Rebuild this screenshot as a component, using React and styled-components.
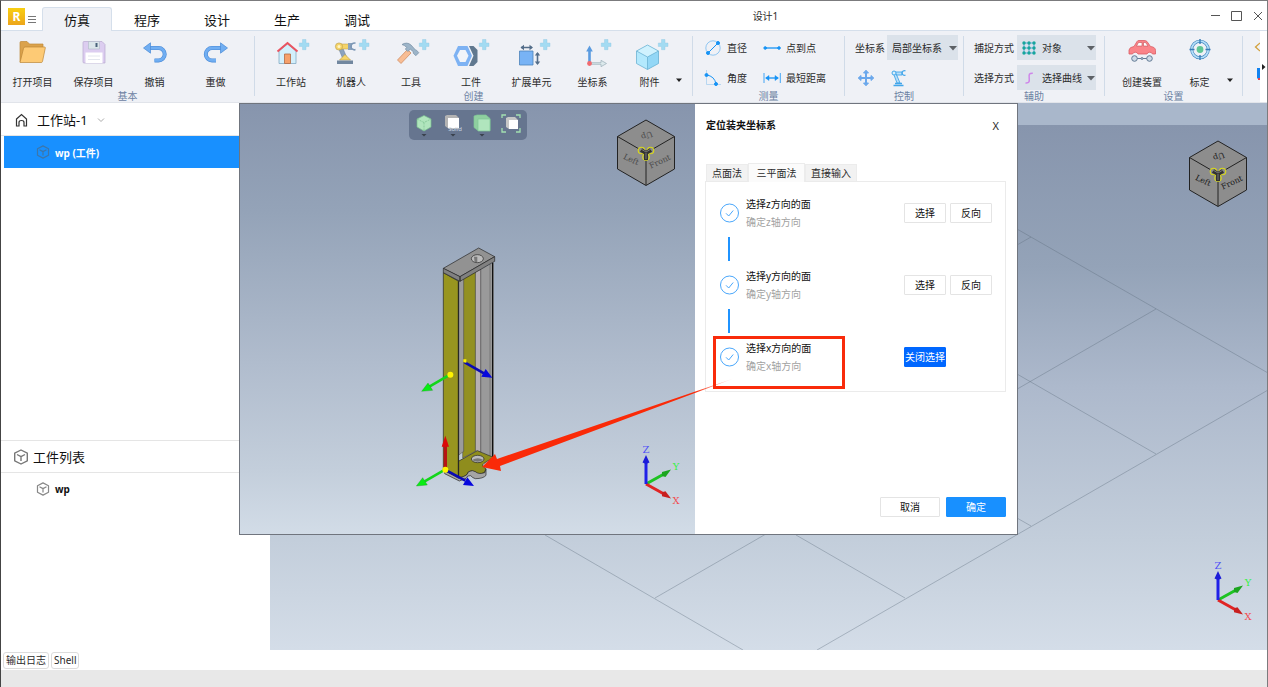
import React from "react";
import styled, { createGlobalStyle } from "styled-components";

const GlobalStyle = createGlobalStyle`
  * { box-sizing: border-box; }
  body { margin: 0; background: #fff; }
  body, button, select {
    font-family: "Noto Sans", "Noto Sans CJK SC", sans-serif;
    font-size: 10px;
    color: #2b2b2b;
  }
  button { padding: 0; border: 0; background: none; cursor: pointer; }
  h1, h2, p, ul, ol { margin: 0; padding: 0; font-weight: normal; list-style: none; }
  svg { display: block; flex: none; }
`;

/* ---------- window frame ---------- */

const Window = styled.div`
  display: flex;
  flex-direction: column;
  min-height: 100vh;
  background: #fff;
  border: solid #7b7b7d;
  border-width: 1px 1px 0 1px;
  border-left-color: #444;
`;

const TitleBar = styled.header`
  display: flex;
  height: 30px;
  border-bottom: 1px solid #d5dfeb;
`;

const Brand = styled.div`
  display: flex;
  align-items: flex-end;
  gap: 2px;
  width: 41px;
  padding: 0 0 5px 7px;
`;

const MenuTabs = styled.nav`
  display: flex;
  align-items: flex-end;
`;

const MenuTab = styled.button`
  width: 70px;
  height: ${(p) => (p.$active ? 24 : 23)}px;
  margin-bottom: -1px;
  font-size: 13px;
  line-height: 22px;
  color: #111;
  border: 1px solid ${(p) => (p.$active ? "#d5dfeb" : "transparent")};
  border-bottom: 0;
  border-radius: 3px 3px 0 0;
  background: ${(p) => (p.$active ? "#eff1f6" : "transparent")};
`;

const WindowTitle = styled.h1`
  flex: 1;
  text-align: center;
  font-size: 10px;
  line-height: 30px;
`;

const WindowButtons = styled.div`
  display: flex;
  align-items: center;
  justify-content: flex-end;
  gap: 6px;
  width: 128px;
  padding-right: 2px;
`;

/* ---------- ribbon ---------- */

const Ribbon = styled.div`
  display: flex;
  height: 72px;
  overflow: hidden;
  background: #eff1f6;
  border-bottom: 1px solid #e1e4ea;
`;

const Group = styled.section`
  display: flex;
  flex-direction: column;
  flex: none;
  width: ${(p) => p.$width}px;
  padding-top: 4px;
`;

const GroupName = styled.h2`
  font-size: 10px;
  line-height: 12px;
  text-align: center;
  color: #6d82a3;
`;

const Separator = styled.div`
  flex: none;
  width: 1px;
  margin: 5px 0 6px;
  background: #d0dbe8;
`;

const Tools = styled.div`
  display: flex;
  height: 55px;
  padding: 3px 0 0 ${(p) => p.$inset || 0}px;
`;

const Tool = styled.button`
  display: flex;
  flex-direction: column;
  align-items: center;
  gap: 9px;
  width: ${(p) => p.$width || 60}px;
  line-height: 14px;
`;

const MoreButton = styled.button`
  display: flex;
  align-items: flex-end;
  padding-bottom: 6px;
`;

const MeasureGrid = styled.div`
  display: grid;
  grid-template-columns: 54px auto;
  grid-auto-rows: 25px;
  justify-content: start;
  column-gap: 5px;
  row-gap: 5px;
  height: 55px;
  padding-left: 11px;
`;

const SmallTool = styled.button`
  display: flex;
  align-items: center;
  gap: 5px;
  white-space: nowrap;
`;

const Fields = styled.div`
  display: flex;
  flex-direction: column;
  gap: 5px;
  height: 55px;
  padding-left: 10px;
`;

const Field = styled.label`
  display: flex;
  align-items: center;
  gap: ${(p) => p.$gap}px;
  height: 25px;
  white-space: nowrap;
`;

const SelectBox = styled.span`
  position: relative;
  display: flex;
  align-items: center;
  gap: 6px;
  width: ${(p) => p.$width}px;
  height: 25px;
  padding-left: 5px;
  background: #dbe2ea;

  select {
    flex: 1;
    min-width: 0;
    height: 25px;
    padding: 0;
    border: 0;
    background: none;
    appearance: none;
  }
  > svg:last-child {
    position: absolute;
    right: 1px;
    pointer-events: none;
  }
`;

const IconRow = styled.div`
  display: flex;
  align-items: center;
  gap: 15px;
  height: 25px;
  padding-left: 2px;
`;

const Overflow = styled.div`
  display: flex;
  flex: 1;
  flex-direction: column;
  align-items: flex-end;
  gap: 13px;
  padding-top: 9px;
  overflow: hidden;
`;

const OverflowButton = styled.button`
  width: 7px;
  background: #fff;
`;

/* ---------- workspace ---------- */

const Workspace = styled.main`
  position: relative;
  display: flex;
  flex: 1;
`;

const Sidebar = styled.aside`
  display: flex;
  flex-direction: column;
  width: 269px;
  padding-top: 1px;
`;

const TreeSection = styled.section`
  flex: ${(p) => p.$share} 1 0;
  border-top: ${(p) => (p.$divided ? "1px solid #e5e5e5" : "0")};
`;

const TreeHeader = styled.div`
  display: flex;
  align-items: center;
  gap: ${(p) => p.$gap}px;
  height: 32px;
  padding-left: ${(p) => p.$inset}px;
  border-bottom: 1px solid #e5e5e5;
  font-size: 13px;
  color: #111;

  button { display: flex; padding: 4px 0; }
`;

const TreeItem = styled.li`
  display: flex;
  align-items: center;
  gap: 5px;
  height: 32px;
  margin-left: 3px;
  padding-left: 32px;
  font-weight: bold;
  color: ${(p) => (p.$selected ? "#fff" : "#111")};
  background: ${(p) => (p.$selected ? "#1890ff" : "transparent")};
`;

const Viewport = styled.div`
  position: relative;
  flex: 1;
  background: linear-gradient(#a9b7cb 22px, #8795ad 22px, #94a3b8 30%, #adb9cc 52%, #c3cedb 80%, #d4dde8);
`;

const GridLines = styled.svg`
  position: absolute;
  inset: 0;
  width: 100%;
  height: 100%;
`;

const NavCube = styled.div`
  position: absolute;
  top: ${(p) => p.$top}px;
  right: 19px;
`;

const AxisMarker = styled.div`
  position: absolute;
  right: 13px;
  bottom: 25px;
`;

const LogBar = styled.div`
  display: flex;
  align-items: center;
  gap: 2px;
  height: 20px;
  padding-left: 2px;
`;

const LogButton = styled.button`
  height: 17px;
  padding: 0 2px;
  line-height: 15px;
  border: 1px solid #dcdcdc;
  border-radius: 3px;
  background: #fff;
`;

const StatusBar = styled.footer`
  height: 17px;
  background: #e8e8e8;
`;

/* ---------- dialog ---------- */

const Dialog = styled.div`
  position: absolute;
  top: 0;
  left: 238px;
  display: flex;
  width: 779px;
  height: 432px;
  border: 1px solid #70757e;
  background: #fff;
`;

const Preview = styled.div`
  position: relative;
  width: 455px;
  background: linear-gradient(#8795ad, #94a3b8 25%, #b0bccd 60%, #c3cedb 85%, #d2dce7);
`;

const ViewTools = styled.div`
  display: flex;
  justify-content: center;
  gap: 5px;
  width: 118px;
  height: 30px;
  margin: 6px auto 0;
  padding-top: 3px;
  border-radius: 5px;
  background: #66758f;
`;

const Model = styled.div`
  position: absolute;
  top: 126px;
  left: 160px;
`;

const Panel = styled.div`
  display: flex;
  flex: 1;
  flex-direction: column;
  padding: 12px 11px 17px 10px;
`;

const PanelHeader = styled.div`
  display: flex;
  justify-content: space-between;
  height: 18px;
  padding: 0 7px 0 1px;
  line-height: 18px;

  h2 { font-size: 10px; font-weight: bold; color: #111; }
  button { font-size: 11px; }
`;

const TabList = styled.div`
  display: flex;
  align-items: flex-end;
  height: 18px;
  margin-top: 29px;
  padding-left: 1px;
`;

const Tab = styled.button`
  width: ${(p) => p.$width}px;
  height: ${(p) => (p.$active ? 19 : 17)}px;
  margin-bottom: ${(p) => (p.$active ? -1 : 0)}px;
  line-height: 16px;
  z-index: 1;
  border: 1px solid #ececec;
  border-bottom: 0;
  background: ${(p) => (p.$active ? "#fbfbfb" : "#f2f2f2")};
`;

const Steps = styled.ol`
  height: 211px;
  padding: 13px 12px 0 13px;
  border: 1px solid #ebebeb;
`;

const Step = styled.li`
  height: 72px;
`;

const StepRow = styled.div`
  display: flex;
  align-items: center;
  height: 36px;
`;

const StepText = styled.div`
  flex: 1;
  padding-left: 7px;
  line-height: 18px;
  color: #111;

  p + p { color: #a2a2a2; }
`;

const StepActions = styled.div`
  display: flex;
  gap: 4px;
  min-width: 89px;
`;

const StepButton = styled.button`
  width: ${(p) => (p.$wide ? 60 : 42)}px;
  height: 20px;
  line-height: 18px;
  white-space: nowrap;
  color: ${(p) => (p.$fill ? "#fff" : "#111")};
  border: 1px solid ${(p) => p.$fill || "#e4e4e4"};
  border-radius: 1px;
  background: ${(p) => p.$fill || "#fff"};
`;

const Connector = styled.div`
  width: 2px;
  height: 24px;
  margin: 6px 0 0 9px;
  background: #1f93ff;
`;

const PanelFooter = styled.div`
  display: flex;
  justify-content: flex-end;
  gap: 6px;
  margin-top: auto;
`;

const Callout = styled.svg`
  position: absolute;
  top: -1px;
  left: -1px;
  pointer-events: none;
`;

/* ---------- drawings ---------- */

const Caret = ({ size = 6, color = "#222" }) => (
  <svg width={size} height="8" viewBox="0 0 8 8" aria-hidden="true">
    <path d="M0 2h8L4 6.500z" fill={color} />
  </svg>
);

const Plus = () => (
  <path d="M29.500 1.500h3.500v3.500h3v3.500h-3v3.200h-3.500v-3.200h-3.200v-3.500h3.200z" fill="#a3dbf2" stroke="#8fc7e2" strokeWidth=".4" />
);

const BigIcon = ({ children, plus }) => (
  <svg width={plus ? 36 : 28} height="28" viewBox={plus ? "0 0 36 28" : "0 0 28 28"} fill="none" overflow="visible" aria-hidden="true">
    {children}
    {plus && <Plus />}
  </svg>
);

const FolderIcon = () => (
  <BigIcon>
    <path d="M1 24V4.500q0-1 1-1h6l2.500 2.500h13.500v4" fill="#dba24b" stroke="#c08a3a" strokeWidth=".7" />
    <path d="M1 24.500 4.500 10.500q.3-1.500 1.500-1.500H25.500q1 0 .8 1L23.500 23.500q-.3 1-1.300 1z" fill="#fdca75" stroke="#bb8738" strokeWidth=".7" />
  </BigIcon>
);
const SaveIcon = () => (
  <BigIcon>
    <path d="M3 4.500q0-1 1-1h18l3 3V25H4q-1 0-1-1z" fill="#dccdf0" stroke="#b9a9d0" strokeWidth=".7" />
    <path d="M8.500 3.500h11V11h-11z" fill="#dbe6ea" stroke="#b0b8c6" strokeWidth=".6" />
    <path d="M15.500 5h2v4h-2z" fill="#48637a" />
    <path d="M5.500 14.500h17V25h-17z" fill="#fff" />
    <path d="M8 18h12M8 21.500h12" stroke="#e3e6ee" />
  </BigIcon>
);
const UndoIcon = () => (
  <BigIcon>
    <path d="M8.500 10h9a6.200 6.200 0 0 1 0 12.400h-4" stroke="#4989d6" strokeWidth="4" />
    <path d="M8.500 10h9a6.200 6.200 0 0 1 0 12.400h-4" stroke="#70aef2" strokeWidth="2.800" />
    <path d="M2.500 10 9.500 4.800v10.400z" fill="#70aef2" stroke="#4989d6" strokeWidth=".7" />
  </BigIcon>
);
const RedoIcon = () => (
  <BigIcon>
    <path d="M19 10h-9a6.200 6.200 0 0 0 0 12.400h4" stroke="#4989d6" strokeWidth="4" />
    <path d="M19 10h-9a6.200 6.200 0 0 0 0 12.400h4" stroke="#70aef2" strokeWidth="2.800" />
    <path d="M25.500 10 18.500 4.800v10.400z" fill="#70aef2" stroke="#4989d6" strokeWidth=".7" />
  </BigIcon>
);
const HouseIcon = () => (
  <BigIcon plus>
    <path d="M6 13 14.500 6 23 13v12.500H6z" fill="#d3effb" stroke="#84abc4" strokeWidth=".8" />
    <path d="M11.500 16h6v9.500h-6z" fill="#f6a06a" stroke="#b26a42" strokeWidth=".8" />
    <path d="m4.500 13.500 10-8.500 10 8.500" stroke="#ea5360" strokeWidth="2" />
  </BigIcon>
);
const RobotIcon = () => (
  <BigIcon plus>
    <path d="m5 9 4.500 11h4.500L8.500 7z" fill="#8ba3bd" stroke="#60789a" strokeWidth=".5" />
    <path d="M6 6h10v5H8z" fill="#f5d469" stroke="#b99b45" strokeWidth=".5" />
    <circle cx="6" cy="8.500" r="3.600" fill="#f5d469" stroke="#b99b45" strokeWidth=".6" />
    <circle cx="6" cy="8.500" r="1.500" fill="#fff4c4" />
    <path d="M15 5h4v7h-4z" fill="#8ba3bd" />
    <path d="M22.500 5.200a3.400 3.400 0 1 0 0 6.400" stroke="#7c97b5" strokeWidth="1.600" />
    <path d="M6.500 22 12 16.500 17.500 22z" fill="#f5d469" stroke="#b99b45" strokeWidth=".6" />
    <path d="M4 22.500h16V26H4z" fill="#71879f" />
  </BigIcon>
);
const HammerIcon = () => (
  <BigIcon plus>
    <path d="m14.500 11.500 3.500 3.500L8 25.500 4.500 22z" fill="#f8bd94" stroke="#d18e63" strokeWidth=".8" />
    <path d="M9 6.500q5-3 9 .5l4.500 5 1 .2 2.300 2.500-3 3-2.500-2.500v-1.500l-3-2.500-2.500 2.300-2.500-2.500 1.500-1.500q-2.500-2.500-4.800-3z" fill="#9db5c9" stroke="#768ea4" strokeWidth=".7" />
  </BigIcon>
);
const NutIcon = () => (
  <BigIcon plus>
    <path d="M14 8h6.500l4 4v12l-4 4H14z" fill="#60788f" />
    <path d="M14 8h2l4.500 9.800L16 28h-2z" fill="#f1f4f9" />
    <path d="M5 8h9.500l4.500 9.800L14.500 28H5L.5 17.800z" fill="#7db2f3" />
    <path d="M7 12h5.500l3 5.800-3 6.200H7l-3-6.200z" fill="#f1f4f9" />
  </BigIcon>
);
const ExtendIcon = () => (
  <BigIcon plus>
    <path d="M5.500 13h13.500v14H5.500z" fill="#78b3f5" stroke="#4d83ba" strokeWidth=".8" />
    <path d="M7 9.500h11M23.500 15v10.500" stroke="#536d89" strokeWidth="1.600" />
    <path d="M10 6.800 6.500 9.500l3.500 2.700M15.500 6.800 19 9.500l-3.500 2.700M20.800 17.500l2.700-3.500 2.700 3.500M20.800 23.500l2.700 3.500 2.700-3.500" fill="#536d89" />
  </BigIcon>
);
const FrameIcon = () => (
  <BigIcon plus>
    <path d="M14.500 25V11" stroke="#5a9be0" strokeWidth="2.600" />
    <path d="M11.200 13.500 14.500 7.500l3.300 6z" fill="#5a9be0" />
    <path d="M15 24.700h11v-2.400l5.500 3.200-5.500 3.200v-2.400H15z" fill="#dce9ec" stroke="#9aaeb8" strokeWidth=".7" />
    <circle cx="14.500" cy="25.500" r="2.400" fill="#f26a6f" />
  </BigIcon>
);
const AccessoryIcon = () => (
  <BigIcon plus>
    <path d="m4.500 13 11-6 11 6v12.500l-11 6-11-6z" fill="#b3e9fd" />
    <path d="m4.500 13 11-6 11 6-11 6z" fill="#d0f2fe" />
    <path d="m15.500 19 11-6v12.500l-11 6z" fill="#93d7f6" />
    <path d="m4.500 13 11-6 11 6v12.500l-11 6-11-6zl11 6 11-6M15.500 19v12.500" stroke="#6cb3d3" strokeWidth=".8" />
  </BigIcon>
);
const CarIcon = () => (
  <BigIcon>
    <path d="M1 16v-4q.5-3 5-3.500L9 3.500q.5-1 2-1h5q2 0 3 1l3.500 5q5 .5 5 4V16h-3a3 3 0 0 0-5.500 0h-9a3 3 0 0 0-5.500 0z" fill="#fa8489" stroke="#d95e65" strokeWidth=".8" />
    <path d="m8.500 8 2-3.500H14V8zM15.500 8V4.500h2L20 8z" fill="#fff" stroke="#c5545a" strokeWidth=".6" />
    <g stroke="#637b95" fill="#cfdbe7">
      <path d="M9 20.500h11" />
      <circle cx="6.500" cy="20.500" r="2.800" /><circle cx="21.500" cy="20.500" r="2.800" />
      <circle cx="14" cy="20.500" r="1" />
    </g>
  </BigIcon>
);
const TargetIcon = () => (
  <BigIcon>
    <circle cx="14" cy="11.500" r="8.300" stroke="#3f83bd" strokeWidth="3" />
    <circle cx="14" cy="11.500" r="8.300" stroke="#b5e0fa" strokeWidth="1.800" />
    <circle cx="14" cy="11.500" r="3.400" fill="#60c695" />
    <path d="M14 1v5M14 17v5M3.500 11.500h5M19.500 11.500h5" stroke="#377bb5" strokeWidth="1.400" />
  </BigIcon>
);

const SmallIcon = ({ children, color = "#1693f5" }) => (
  <svg width="18" height="18" viewBox="0 0 18 18" fill="none" stroke={color} aria-hidden="true">{children}</svg>
);
const DiameterIcon = () => (
  <SmallIcon>
    <circle cx="9" cy="9" r="7.200" stroke="#78bbf0" strokeWidth=".8" />
    <path d="M4 14 14 4" />
    <circle cx="4" cy="14" r="1.500" fill="#1693f5" /><circle cx="14" cy="4" r="1.500" fill="#1693f5" />
  </SmallIcon>
);
const AngleIcon = () => (
  <SmallIcon>
    <path d="M2.500 1v14.500H17" stroke="#a9d0f0" strokeWidth=".8" />
    <path d="M2.500 6q8 1 9.500 9" />
    <circle cx="2.500" cy="6" r="1.500" fill="#1693f5" /><circle cx="12" cy="15" r="1.500" fill="#1693f5" />
  </SmallIcon>
);
const PointIcon = () => (
  <SmallIcon>
    <path d="M2 9h15" strokeWidth="1.300" />
    <circle cx="2.200" cy="9" r="1.300" fill="#1693f5" /><circle cx="16" cy="9" r="1.300" fill="#1693f5" />
  </SmallIcon>
);
const DistanceIcon = () => (
  <SmallIcon>
    <path d="M1 4v10M17.300 4v10" strokeWidth=".8" />
    <path d="M3 9h12" strokeWidth="1.300" />
    <path d="M6 6.500 2.500 9 6 11.500zM12 6.500 15.500 9 12 11.500z" fill="#1693f5" strokeWidth=".5" />
  </SmallIcon>
);
const MoveIcon = () => (
  <SmallIcon color="#6ba8ec">
    <path d="M9 3v12M3 9h12" strokeWidth="2" />
    <path d="M6.500 4 9 1.200 11.500 4zM6.500 14 9 16.800 11.500 14zM4 6.500 1.200 9 4 11.500zM14 6.500 16.800 9 14 11.500z" fill="#6ba8ec" />
  </SmallIcon>
);
const ArmIcon = () => (
  <SmallIcon color="#42a6ea">
    <path d="M4 6l3 8h3L6 4.500M5 3h7v3H6" fill="#b8def8" strokeWidth=".9" />
    <circle cx="4" cy="4" r="2" fill="#d8effc" />
    <path d="M15.500 2a2.300 2.300 0 1 0 0 4" strokeWidth="1.300" />
    <path d="M3.500 16.500h10M5 14.500h7" strokeWidth="1.500" />
  </SmallIcon>
);
const SnapGridIcon = () => (
  <svg width="14" height="14" viewBox="0 0 14 14" aria-hidden="true">
    <path d="M2 1v12M7 1v12M12 1v12M1 2h12M1 7h12M1 12h12" stroke="#3799d4" fill="none" strokeWidth=".8" />
    {[2, 7, 12].map((x) => [2, 7, 12].map((y) => <circle key={`${x}-${y}`} cx={x} cy={y} r="1.700" fill="#17a69c" />))}
  </svg>
);
const CurveIcon = () => (
  <svg width="14" height="14" viewBox="0 0 14 14" fill="none" aria-hidden="true">
    <path d="M3.500 12c4 .3 4-1.500 3.700-5S7 2 10.800 2.200" stroke="#cf86ea" strokeWidth="1.500" />
  </svg>
);

const CubeOutline = ({ size, color }) => (
  <svg width={size} height={size} viewBox="0 0 16 16" fill="none" stroke={color} strokeWidth="1.400" strokeLinejoin="round" aria-hidden="true">
    <path d="m8 1 6.300 3.200v7.600L8 15l-6.300-3.200V4.200zM4 5.500 8 7.600l4-2.100M8 7.600V12" />
  </svg>
);

const LOBES = [[25.5, 31.5], [34.5, 31.5], [30, 38]];

const OrientationCube = ({ ink }) => (
  <svg width="60" height="68" viewBox="0 0 60 68" aria-hidden="true">
    <path d="m30 1 28.500 16.500v32.500L30 66.500 1.500 50V17.500z" fill="#8d8d8d" stroke="#222" />
    <path d="M1.500 17.500 30 34l28.500-16.500M30 34v32" fill="none" stroke="#222" />
    <g fontFamily="DejaVu Serif, serif" fontSize="8" textAnchor="middle" fill={ink}>
      <text transform="translate(14 43) rotate(25)">Left</text>
      <text transform="translate(45 45) rotate(-25)">Front</text>
      <text transform="translate(30 14) rotate(160)">Up</text>
    </g>
    {LOBES.map(([x, y]) => <circle key={x} cx={x} cy={y} r="3.800" fill="#dada18" />)}
    {LOBES.map(([x, y]) => <circle key={x} cx={x} cy={y} r="2.700" fill="#8d8d8d" />)}
    <path d="m25 31 5 3 5-3M30 34v7" stroke="#333" strokeWidth="4" fill="none" />
    <path d="m25 30 5 3 5-3M30 34v6" stroke="#777" fill="none" />
  </svg>
);

const Axes = () => (
  <svg width="42" height="64" viewBox="0 0 42 64" aria-hidden="true">
    <g strokeWidth="3" fill="none">
      <path d="M6 39 24 29" stroke="#1ec323" /><path d="M6 39 24 49" stroke="#e02424" /><path d="M6 39V17" stroke="#2020e8" />
    </g>
    <path d="M2.500 17.500 6 10l3.500 7.500L6 19z" fill="#1c1cd8" />
    <path d="m22 27 9-2.500-5.500 7.500-3.500-1z" fill="#1ba51f" />
    <path d="m25.500 46.200 5.500 7.300-9-2.300v-4z" fill="#c81f1f" />
    <g fontFamily="DejaVu Serif, serif" fontSize="10" textAnchor="middle">
      <text x="6" y="8" fill="#5252f5">Z</text>
      <text x="36" y="25" fill="#3df04b">Y</text>
      <text x="36" y="59" fill="#f24e52">X</text>
    </g>
  </svg>
);

const Fixture = () => (
  <svg width="130" height="270" viewBox="0 0 390 810" aria-hidden="true">
    <path d="M238 120 281 98V682L238 664z" fill="#9a9a9a" />
    <path d="M226 126 242 118V668L226 662z" fill="#b6afb3" stroke="#555" strokeWidth="1.500" />
    <path d="M242 118V668M270 102V678" stroke="#666" strokeWidth="2" />
    <path d="M278 98V684" stroke="#111" strokeWidth="4" />
    <path d="M188 146 226 124V664L188 684z" fill="#939020" stroke="#444" strokeWidth="1.500" />
    <path d="m175 694 57-32 48 20-28 18q-10 8 6 16l-5 12q-20 8-28-3-12-5-20 1-4 12-14 14l-16 6z" fill="#8f8d1d" stroke="#222" strokeWidth="2" />
    <path d="M258 718v18q-8 10-32 10-8-2-14-9-10-2-14 8l-20 8-44-22v-8l44 20 14-4q10-3 14-14 12-6 20 0 10 9 28 3z" fill="#a5a5a5" stroke="#222" strokeWidth="2" />
    <ellipse cx="233" cy="687" rx="19" ry="11" fill="#bbb" stroke="#222" strokeWidth="2" />
    <path d="M216 690q18-10 34 0-18 10-34 0" fill="#777" />
    <path d="M175 152 191 146V664L175 676z" fill="#9b9b9b" stroke="#444" strokeWidth="1.500" />
    <path d="M130 128 176 154V745L130 719z" fill="#98951f" stroke="#222" strokeWidth="2" />
    <path d="M175 154V742" stroke="#222" strokeWidth="3" />
    <path d="m130 115 106-61 48 26-104 60z" fill="#929292" stroke="#222" strokeWidth="2" />
    <path d="M130 115v13l50 26v-14zM180 140v14l104-60V80z" fill="#818181" stroke="#222" strokeWidth="2" />
    <ellipse cx="232" cy="86" rx="18" ry="12" fill="#bcbcbc" stroke="#222" strokeWidth="2" />
    <path d="M222 80h10v16h-8z" fill="#777" />
    <g strokeWidth="8">
      <path d="M150 434 88 470M135 719 74 754" stroke="#14d51b" />
      <path d="M194 397 252 430M135 719 196 752" stroke="#0a0ab5" />
      <path d="M136 718V648" stroke="#b71414" strokeWidth="10" />
    </g>
    <path d="m65 484 19-25 14 22zM49 768l19-25 14 22z" fill="#08ed14" stroke="#148b1a" />
    <path d="m277 443-33-3 13-23zM222 768l-33-3 13-23z" fill="#0707dd" />
    <path d="m136 617 11 33h-22z" fill="#dc0909" />
    <g fill="#fff300"><circle cx="151" cy="434" r="9" /><circle cx="136" cy="719" r="9" /><path d="M190 388h9v11l-9-4z" /></g>
  </svg>
);

const ViewIcon = ({ kind }) => (
  <svg width="24" height="26" viewBox="0 0 24 26" aria-hidden="true">
    {kind === "iso" && (
      <g stroke="#79be8e" strokeWidth=".7">
        <path d="m12 1.500 7 3.500v8L12 17l-7-4V5z" fill="#b0e5bd" />
        <path d="m5 5 7 3.500L19 5M12 8.500V17" fill="none" strokeDasharray="2 1" />
      </g>
    )}
    {kind === "solid" && (
      <>
        <path d="m4 2 2-1h9l3 3v11H8l-4-3z" fill="#b3b3b3" /><path d="M7 4h11v10H7z" fill="#fff" />
        <text x="14" y="17" fontSize="6" textAnchor="middle" fill="#c8d5e2">Solid</text>
      </>
    )}
    {kind === "box" && (
      <g stroke="#80c795" strokeWidth=".7">
        <path d="m4 2 3-1h9l4 3.500v12H8l-4-3z" fill="#8fcfa0" /><path d="M8 5h12v12H8z" fill="#b0e5bd" />
      </g>
    )}
    {kind === "fit" && (
      <>
        <path d="m7 4 2-1h7l3 3v9H10l-3-2z" fill="#c6c6c6" /><path d="M10 6h9v9h-9z" fill="#fff" />
        <path d="M3 4V1h4M17 1h4v3M3 14v4h4M21 14v4h-4" stroke="#a2e0b1" fill="none" strokeWidth="1.300" />
      </>
    )}
    {kind !== "fit" && <path d="M9.500 20h5L12 22.500z" fill="#3a414d" />}
  </svg>
);

const CheckCircle = () => (
  <svg width="20" height="20" viewBox="0 0 20 20" fill="none" stroke="#4aa7fb" aria-hidden="true">
    <circle cx="10.500" cy="10" r="9" /><path d="m7 10.300 2.700 2.700 4.500-5.500" />
  </svg>
);

/* ---------- data ---------- */

const MENU = ["仿真", "程序", "设计", "生产", "调试"];
const BASIC = [["打开项目", FolderIcon], ["保存项目", SaveIcon], ["撤销", UndoIcon], ["重做", RedoIcon]];
const CREATE = [
  ["工作站", HouseIcon], ["机器人", RobotIcon], ["工具", HammerIcon], ["工件", NutIcon],
  ["扩展单元", ExtendIcon, 61], ["坐标系", FrameIcon, 61], ["附件", AccessoryIcon, 53],
];
const MEASURE = [["直径", DiameterIcon], ["点到点", PointIcon], ["角度", AngleIcon], ["最短距离", DistanceIcon]];
const STEPS = ["z", "y", "x"];

function Dropdown({ width, icon, value }) {
  return (
    <SelectBox $width={width}>
      {icon}
      <select defaultValue={value}><option>{value}</option></select>
      <Caret size={8} color="#5d6166" />
    </SelectBox>
  );
}

function RibbonBar() {
  return (
    <Ribbon>
      <Group $width={253}>
        <Tools $inset={1}>
          {BASIC.map(([name, Icon]) => <Tool key={name} $width={61}><Icon />{name}</Tool>)}
        </Tools>
        <GroupName>基本</GroupName>
      </Group>
      <Separator />
      <Group $width={437}>
        <Tools $inset={6}>
          {CREATE.map(([name, Icon, width]) => <Tool key={name} $width={width}><Icon />{name}</Tool>)}
          <MoreButton aria-label="更多附件"><Caret /></MoreButton>
        </Tools>
        <GroupName>创建</GroupName>
      </Group>
      <Separator />
      <Group $width={151}>
        <MeasureGrid>
          {MEASURE.map(([name, Icon]) => <SmallTool key={name}><Icon />{name}</SmallTool>)}
        </MeasureGrid>
        <GroupName>测量</GroupName>
      </Group>
      <Separator />
      <Group $width={118}>
        <Fields>
          <Field $gap={2}>坐标系<Dropdown width={71} value="局部坐标系" /></Field>
          <IconRow>
            <SmallTool aria-label="移动"><MoveIcon /></SmallTool>
            <SmallTool aria-label="机械臂"><ArmIcon /></SmallTool>
          </IconRow>
        </Fields>
        <GroupName>控制</GroupName>
      </Group>
      <Separator />
      <Group $width={140}>
        <Fields>
          <Field $gap={3}>捕捉方式<Dropdown width={79} icon={<SnapGridIcon />} value="对象" /></Field>
          <Field $gap={3}>选择方式<Dropdown width={79} icon={<CurveIcon />} value="选择曲线" /></Field>
        </Fields>
        <GroupName>辅助</GroupName>
      </Group>
      <Separator />
      <Group $width={137}>
        <Tools $inset={7}>
          <Tool><CarIcon />创建装置</Tool>
          <Tool $width={55}><TargetIcon />标定</Tool>
          <MoreButton aria-label="更多设置"><Caret /></MoreButton>
        </Tools>
        <GroupName>设置</GroupName>
      </Group>
      <Separator />
      <Overflow>
        <svg width="6" height="14" viewBox="0 0 6 14" fill="none" aria-hidden="true">
          <path d="M6 3 1.500 7 6 11" stroke="#d2a03c" strokeWidth="1.300" />
        </svg>
        <svg width="3" height="14" viewBox="0 0 3 14" aria-hidden="true">
          <path d="M0 1h3v11H1L0 11z" fill="#1282ef" /><path d="M1 11h2v2H1z" fill="#e9424b" />
        </svg>
      </Overflow>
      <OverflowButton aria-label="展开工具栏">
        <svg width="6" height="8" viewBox="0 0 6 8" aria-hidden="true"><path d="M2 1 5.500 4 2 7z" fill="#222" /></svg>
      </OverflowButton>
    </Ribbon>
  );
}

function FixtureDialog() {
  return (
    <Dialog role="dialog" aria-label="定位装夹坐标系">
      <Preview>
        <ViewTools>
          {["iso", "solid", "box", "fit"].map((kind) => <SmallTool key={kind} aria-label={kind}><ViewIcon kind={kind} /></SmallTool>)}
        </ViewTools>
        <Model><Fixture /></Model>
        <NavCube $top={15}><OrientationCube ink="#4b4b4b" /></NavCube>
        <AxisMarker><Axes /></AxisMarker>
      </Preview>
      <Panel>
        <PanelHeader><h2>定位装夹坐标系</h2><button aria-label="关闭">X</button></PanelHeader>
        <TabList role="tablist">
          <Tab role="tab" $width={42}>点面法</Tab>
          <Tab role="tab" aria-selected="true" $active $width={57}>三平面法</Tab>
          <Tab role="tab" $width={52}>直接输入</Tab>
        </TabList>
        <Steps>
          {STEPS.map((axis) => (
            <Step key={axis}>
              <StepRow>
                <CheckCircle />
                <StepText><p>选择{axis}方向的面</p><p>确定{axis}轴方向</p></StepText>
                <StepActions>
                  {axis === "x"
                    ? <StepButton $fill="#0067ff">关闭选择</StepButton>
                    : <><StepButton>选择</StepButton><StepButton>反向</StepButton></>}
                </StepActions>
              </StepRow>
              {axis !== "x" && <Connector />}
            </Step>
          ))}
        </Steps>
        <PanelFooter>
          <StepButton $wide>取消</StepButton>
          <StepButton $wide $fill="#1890ff">确定</StepButton>
        </PanelFooter>
      </Panel>
      <Callout width="778" height="432" viewBox="239 103 778 432" aria-hidden="true">
        <defs>
          <linearGradient id="fade" gradientUnits="userSpaceOnUse" x1="735" y1="378" x2="695" y2="392">
            <stop offset="0" stopColor="#fa2a08" stopOpacity="0" /><stop offset="1" stopColor="#fa2a08" />
          </linearGradient>
        </defs>
        <path d="m482 467 13-13 2 5L735 378 500 466l1 5z" fill="url(#fade)" />
        <rect x="714.500" y="337.500" width="129" height="50" fill="none" stroke="#f92b0b" strokeWidth="3" />
      </Callout>
    </Dialog>
  );
}

export default function App() {
  return (
    <Window>
      <GlobalStyle />
      <TitleBar>
        <Brand>
          <svg width="17" height="17" viewBox="0 0 17 17" role="img" aria-label="R">
            <defs><linearGradient id="gold" x2="0" y2="1"><stop stopColor="#f8cf12" /><stop offset="1" stopColor="#eda51b" /></linearGradient></defs>
            <path d="M0 0h17v17H0z" fill="url(#gold)" />
            <text x="8.500" y="13" textAnchor="middle" fontFamily="Noto Sans, sans-serif" fontWeight="bold" fontSize="12" fill="#fff">R</text>
          </svg>
          <button aria-label="菜单">
            <svg width="10" height="10" viewBox="0 0 10 10" aria-hidden="true"><path d="M1 1.500h8M1 4.500h8M1 7.500h8" stroke="#777" /></svg>
          </button>
        </Brand>
        <MenuTabs>{MENU.map((name, i) => <MenuTab key={name} $active={i === 0}>{name}</MenuTab>)}</MenuTabs>
        <WindowTitle>设计1</WindowTitle>
        <WindowButtons>
          {[["最小化", "M3 6.500h9"], ["最大化", "M2.500 2.500h10v9h-10z"], ["关闭", "m4 3 8 8M12 3l-8 8"]].map(([name, d]) => (
            <button key={name} aria-label={name}>
              <svg width="15" height="14" viewBox="0 0 15 14" fill="none" stroke="#555" aria-hidden="true"><path d={d} /></svg>
            </button>
          ))}
        </WindowButtons>
      </TitleBar>
      <RibbonBar />
      <Workspace>
        <Sidebar>
          <TreeSection $share={337}>
            <TreeHeader $gap={9} $inset={14}>
              <svg width="13" height="14" viewBox="0 0 13 14" fill="none" stroke="#333" strokeWidth="1.200" aria-hidden="true">
                <path d="M1.500 6 6.500 1.500l5 4.500v7H9V9.500q0-2-2.500-2T4 9.500V13H1.500z" />
              </svg>
              工作站-1
              <button aria-label="切换工作站">
                <svg width="8" height="6" viewBox="0 0 8 6" fill="none" stroke="#aaa" aria-hidden="true"><path d="m1 1.500 3 3 3-3" /></svg>
              </button>
            </TreeHeader>
            <ul><TreeItem $selected><CubeOutline size={14} color="#3c76ab" />wp (工件)</TreeItem></ul>
          </TreeSection>
          <TreeSection $share={209} $divided>
            <TreeHeader $gap={4} $inset={12}><CubeOutline size={16} color="#777" />工件列表</TreeHeader>
            <ul><TreeItem><CubeOutline size={14} color="#888" />wp</TreeItem></ul>
          </TreeSection>
        </Sidebar>
        <Viewport>
          <GridLines viewBox="270 103 997 547" preserveAspectRatio="xMaxYMin slice" fill="none" stroke="#5c6b7c" strokeOpacity=".38" aria-hidden="true">
            <path d="M1017 229 1268 373M1156 309 655 598M1268 390 817 650M1017 374l139 80M1017 518l14 8M796 535l109 63M545 535l198 115M1031 237l-14 8" />
          </GridLines>
          <NavCube $top={37}><OrientationCube ink="#1c1c1c" /></NavCube>
          <AxisMarker><Axes /></AxisMarker>
        </Viewport>
        <FixtureDialog />
      </Workspace>
      <LogBar><LogButton>输出日志</LogButton><LogButton>Shell</LogButton></LogBar>
      <StatusBar />
    </Window>
  );
}
